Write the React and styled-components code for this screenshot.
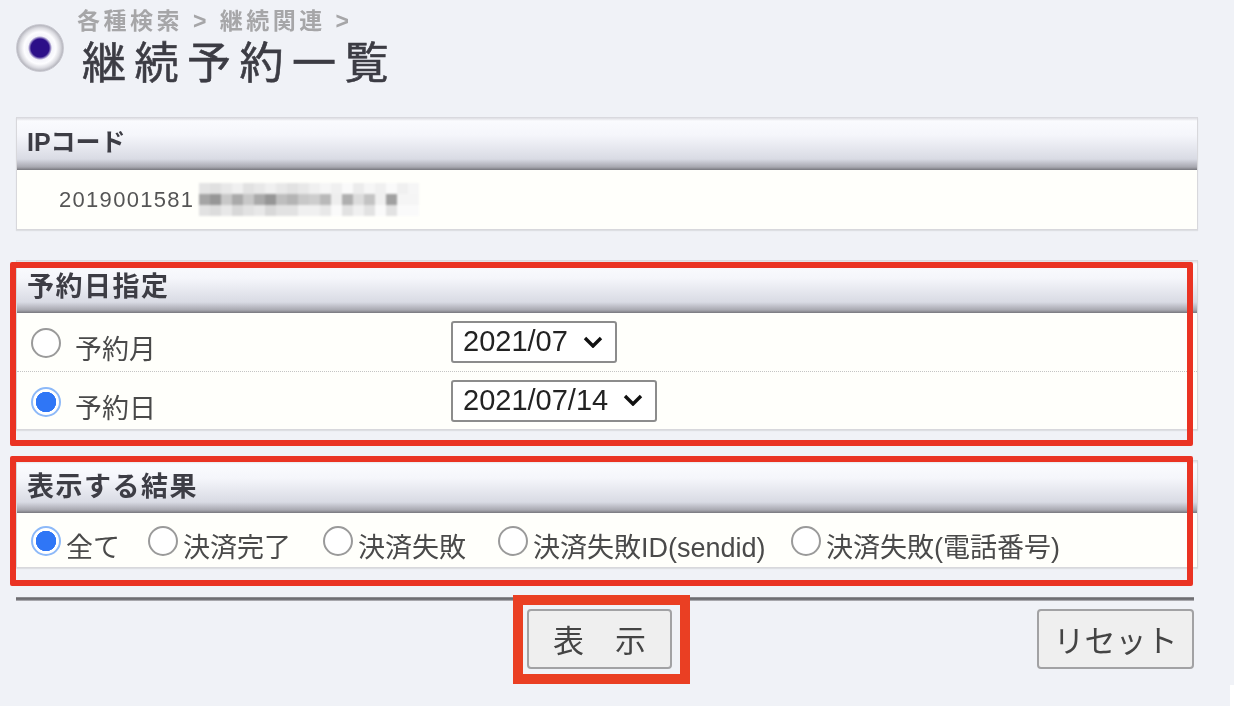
import styled, { createGlobalStyle } from 'styled-components';

const GlobalStyle = createGlobalStyle`
  html, body {
    margin: 0;
    padding: 0;
    background: #f0f2f7;
  }
  body {
    font-family: "Liberation Sans", "Noto Sans CJK JP", sans-serif;
  }
`;

const mosaicRows = [
  [228, 224, 232, 240, 226, 232, 240, 232, 226, 232, 240, 246, 240, 250, 236, 246, 240, 250, 240, 246],
  [165, 150, 200, 170, 200, 170, 150, 190, 180, 200, 205, 185, 238, 175, 220, 195, 240, 160, 245, 245],
  [226, 220, 232, 216, 226, 232, 216, 226, 226, 240, 240, 232, 250, 226, 240, 226, 250, 226, 250, 250],
];

export default function App() {
  return (
    <Page>
      <GlobalStyle />

      <TitleBlock>
        <TitleIcon />
        <TitleTexts>
          <Breadcrumb>各種検索 &gt; 継続関連 &gt;</Breadcrumb>
          <PageTitle>継続予約一覧</PageTitle>
        </TitleTexts>
      </TitleBlock>

      <Section $top={32}>
        <SectionHead $small>IPコード</SectionHead>
        <CodeRow>
          <CodeText>2019001581</CodeText>
          <Mosaic>
            {mosaicRows.flat().map((shade, i) => (
              <MosaicCell key={i} $shade={shade} />
            ))}
          </Mosaic>
        </CodeRow>
      </Section>

      <Highlighted $top={30}>
        <Section>
          <SectionHead>予約日指定</SectionHead>
          <DateRow $dotted>
            <DateLabel>
              <Radio />
              <RadioName>予約月</RadioName>
            </DateLabel>
            <SelectBox>
              2021/07
              <Chevron />
            </SelectBox>
          </DateRow>
          <DateRow>
            <DateLabel>
              <Radio $checked />
              <RadioName>予約日</RadioName>
            </DateLabel>
            <SelectBox>
              2021/07/14
              <Chevron />
            </SelectBox>
          </DateRow>
        </Section>
        <RedFrame $over={-2} $under={16} />
      </Highlighted>

      <Highlighted $top={30}>
        <Section>
          <SectionHead>表示する結果</SectionHead>
          <ResultRow>
            <ResultItem $width={117}>
              <Radio $checked />
              <ResultName>全て</ResultName>
            </ResultItem>
            <ResultItem $width={175}>
              <Radio />
              <ResultName>決済完了</ResultName>
            </ResultItem>
            <ResultItem $width={175}>
              <Radio />
              <ResultName>決済失敗</ResultName>
            </ResultItem>
            <ResultItem $width={293}>
              <Radio />
              <ResultName>決済失敗ID(sendid)</ResultName>
            </ResultItem>
            <ResultItem>
              <Radio />
              <ResultName>決済失敗(電話番号)</ResultName>
            </ResultItem>
          </ResultRow>
        </Section>
        <RedFrame $over={4} $under={18} />
      </Highlighted>

      <Divider />

      <ButtonRow>
        <SubmitWrap>
          <ActionButton $width={145}>表　示</ActionButton>
        </SubmitWrap>
        <ActionButton $width={157}>リセット</ActionButton>
      </ButtonRow>
    </Page>
  );
}

function Chevron() {
  return (
    <ChevronSvg viewBox="0 0 20 12">
      <path d="M2 2 L10 10 L18 2" fill="none" stroke="#111" strokeWidth="3.4" />
    </ChevronSvg>
  );
}

const Page = styled.div`
  position: relative;
  width: 1234px;
  height: 706px;
  box-sizing: border-box;
  padding: 10px 36px 0 16px;
  overflow: hidden;
  background: #f0f2f7;

  &::after {
    content: '';
    position: absolute;
    right: 0;
    bottom: 0;
    width: 4px;
    height: 21px;
    background: #fff;
  }
`;

const TitleBlock = styled.div`
  display: flex;
  align-items: flex-start;
  height: 75px;
`;

const TitleIcon = styled.div`
  flex: none;
  width: 48px;
  height: 48px;
  margin-top: 14px;
  border-radius: 50%;
  box-sizing: border-box;
  border: 1px solid #c8c8d0;
  background: radial-gradient(circle at 50% 50%, #2c0f88 0, #2c0f88 9px, #f4f4fa 12px, #fdfdff 16px, #dcdce2 20px, #a8a8b0 24px);
  filter: blur(0.4px);
`;

const TitleTexts = styled.div`
  display: flex;
  flex-direction: column;
  margin-left: 13px;
`;

const Breadcrumb = styled.div`
  height: 23px;
  font-size: 23px;
  line-height: 23px;
  font-weight: 700;
  letter-spacing: 3.5px;
  color: #a6a6a8;
  white-space: nowrap;
  filter: blur(0.7px);
`;

const PageTitle = styled.h1`
  margin: 4px 0 0 5px;
  font-size: 44px;
  line-height: 46px;
  font-weight: 400;
  letter-spacing: 8.5px;
  color: #3c3c44;
  -webkit-text-stroke: 0.6px #3c3c44;
  white-space: nowrap;
  font-family: "Noto Sans CJK JP", sans-serif;
  filter: blur(0.5px);
`;

const Highlighted = styled.div`
  position: relative;
  margin-top: ${(props) => props.$top}px;
`;

const RedFrame = styled.div`
  position: absolute;
  left: -6px;
  right: 5px;
  top: ${(props) => -props.$over}px;
  bottom: ${(props) => -props.$under}px;
  border: 6px solid #ea3323;
  border-radius: 2px;
  pointer-events: none;
`;

const Section = styled.section`
  margin-top: ${(props) => props.$top || 0}px;
  border: 1px solid #d8d8dc;
  border-top: 0;
  background: #fffffb;
  box-shadow: 0 1px 1px rgba(0, 0, 0, 0.08);
`;

const SectionHead = styled.div`
  height: 53px;
  box-sizing: border-box;
  padding: ${(props) => (props.$small ? 5 : 7)}px 0 0 10px;
  font-size: ${(props) => (props.$small ? 25 : 27)}px;
  line-height: 40px;
  font-weight: 700;
  letter-spacing: ${(props) => (props.$small ? 0 : 1.5)}px;
  color: #3d3d45;
  background: linear-gradient(#d4d4da 0, #fafbfe 4px, #f5f6fb 18px, #d9dbe4 42px, #a8a8b0 50px, #77777d 53px);
  white-space: nowrap;
  filter: blur(0.4px);
`;

const CodeRow = styled.div`
  display: flex;
  align-items: center;
  height: 59px;
  padding-left: 42px;
`;

const CodeText = styled.span`
  font-size: 22px;
  color: #555;
  letter-spacing: 1.3px;
  filter: blur(0.4px);
`;

const Mosaic = styled.div`
  display: grid;
  grid-template-columns: repeat(20, 11px);
  grid-auto-rows: 11px;
  margin-left: 5px;
  filter: blur(1px);
`;

const MosaicCell = styled.div`
  background: rgb(${(props) => props.$shade}, ${(props) => props.$shade}, ${(props) => props.$shade});
`;

const DateRow = styled.div`
  display: flex;
  align-items: center;
  height: ${(props) => (props.$dotted ? 59 : 57)}px;
  padding-left: 14px;
  box-sizing: border-box;
  border-bottom: ${(props) => (props.$dotted ? '1px dotted #c4c4c4' : '0')};
`;

const DateLabel = styled.div`
  display: flex;
  align-items: center;
  width: 420px;
`;

const Radio = styled.span`
  flex: none;
  width: 30px;
  height: 30px;
  margin-top: 2px;
  box-sizing: border-box;
  border-radius: 50%;
  border: 2px solid ${(props) => (props.$checked ? '#8db9f8' : '#9a9a9a')};
  background: ${(props) => (props.$checked ? 'radial-gradient(circle, #2f76f6 0, #2f76f6 10px, #fff 10.5px)' : '#fff')};
`;

const RadioName = styled.span`
  margin: 16px 0 0 14px;
  font-size: 27px;
  line-height: 30px;
  color: #4a4a4a;
  white-space: nowrap;
  filter: blur(0.4px);
`;

const SelectBox = styled.div`
  display: flex;
  align-items: center;
  gap: 15px;
  height: 42px;
  box-sizing: border-box;
  padding: 0 12px 1px 10px;
  border: 2px solid #8c8c8c;
  border-radius: 3px;
  background: #fff;
  font-size: 29px;
  color: #222;
  white-space: nowrap;
  filter: blur(0.3px);
`;

const ChevronSvg = styled.svg`
  width: 20px;
  height: 12px;
`;

const ResultRow = styled.div`
  display: flex;
  align-items: center;
  height: 54px;
  padding-left: 14px;
`;

const ResultItem = styled.div`
  display: flex;
  align-items: center;
  flex: none;
  width: ${(props) => (props.$width ? `${props.$width}px` : 'auto')};
`;

const ResultName = styled.span`
  margin: 15px 0 0 5px;
  font-size: 27px;
  line-height: 30px;
  color: #4a4a4a;
  white-space: nowrap;
  filter: blur(0.4px);
`;

const Divider = styled.div`
  height: 4px;
  margin: 29px 4px 0 0;
  background: linear-gradient(#9a9a9e, #5e5e62 50%, #c0c0c5);
`;

const ButtonRow = styled.div`
  display: flex;
  justify-content: space-between;
  align-items: flex-start;
  margin: 8px 4px 0 511px;
`;

const SubmitWrap = styled.div`
  position: relative;
  display: flex;
  &::after {
    content: '';
    position: absolute;
    left: -14px;
    right: -18px;
    top: -14px;
    bottom: -15px;
    border: 10px solid #ea3f23;
    pointer-events: none;
  }
`;

const ActionButton = styled.button`
  width: ${(props) => props.$width}px;
  height: 60px;
  padding: 0;
  border: 2px solid #a2a2a4;
  border-radius: 4px;
  background: #efefef;
  font-family: "Noto Sans CJK JP", sans-serif;
  font-size: 31px;
  line-height: 50px;
  color: #444;
  white-space: nowrap;
  filter: blur(0.3px);
`;
